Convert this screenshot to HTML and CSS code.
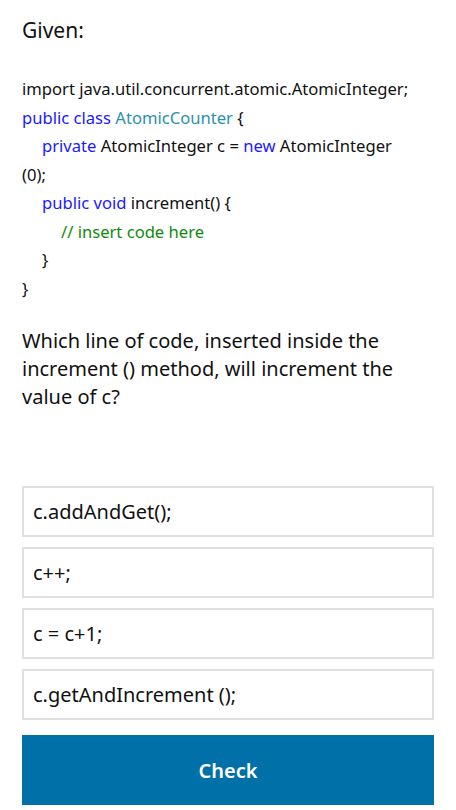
FILE: index.html
```html
<!DOCTYPE html>
<html>
<head>
<meta charset="utf-8">
<link rel="stylesheet" href="styles.css">
</head>
<body>
<div class="page">
  <div class="given">Given:</div>
  <div class="code">
    <div class="line">import java.util.concurrent.atomic.AtomicInteger;</div>
    <div class="line"><span class="kw">public class</span> <span class="type">AtomicCounter</span> {</div>
    <div class="line ind1"><span class="kw">private</span> AtomicInteger c = <span class="kw">new</span> AtomicInteger</div>
    <div class="line">(0);</div>
    <div class="line ind1"><span class="kw">public void</span> increment() {</div>
    <div class="line ind2"><span class="comment">// insert code here</span></div>
    <div class="line ind1">}</div>
    <div class="line">}</div>
  </div>
  <div class="question">Which line of code, inserted inside the increment () method, will increment the value of c?</div>
  <div class="options">
    <div class="option">c.addAndGet();</div>
    <div class="option">c++;</div>
    <div class="option">c = c+1;</div>
    <div class="option">c.getAndIncrement ();</div>
  </div>
  <div class="check">Check</div>
</div>
</body>
</html>
```
FILE: styles.css
```css
html, body {
  margin: 0;
  padding: 0;
  background: #ffffff;
}
body {
  font-family: "Noto Sans", "Open Sans", sans-serif;
  color: #111111;
}
.page {
  padding: 16px 22px 0 22px;
  display: flex;
  flex-direction: column;
}
.given {
  font-size: 21px;
  line-height: 28px;
}
.code {
  margin-top: 31px;
  font-size: 16.6px;
  line-height: 28.5px;
}
.ind1 { padding-left: 20px; }
.ind2 { padding-left: 39px; }
.kw { color: #1a1aff; }
.type { color: #2b91af; }
.comment { color: #0f8a0f; }
.question {
  margin-top: 24px;
  font-size: 20px;
  line-height: 28px;
}
.options {
  margin-top: 75px;
  display: flex;
  flex-direction: column;
  gap: 10px;
}
.option {
  height: 51px;
  box-sizing: border-box;
  border: 2px solid #e0e0e0;
  padding: 0 9px;
  display: flex;
  align-items: center;
  font-size: 20px;
}
.check {
  margin-top: 15px;
  height: 70px;
  background: #0070a8;
  color: #ffffff;
  display: flex;
  align-items: center;
  justify-content: center;
  font-size: 20px;
  font-weight: 600;
}
```
